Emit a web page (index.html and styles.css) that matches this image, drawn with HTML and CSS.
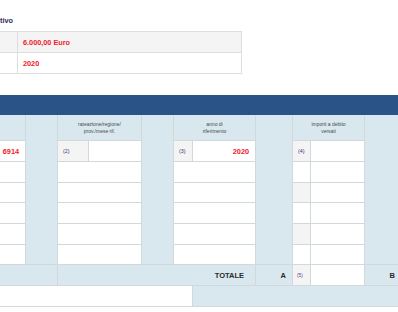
FILE: index.html
```html
<!DOCTYPE html>
<html lang="it">
<head>
<meta charset="utf-8">
<title>F24</title>
<link rel="stylesheet" href="styles.css">
</head>
<body>
<div class="page">
  <div class="title">tivo</div>

  <div class="summary">
    <div class="s-cell s-odd"></div>
    <div class="s-cell s-odd s-val">6.000,00 Euro</div>
    <div class="s-cell"></div>
    <div class="s-cell s-val">2020</div>
  </div>

  <div class="bar"></div>

  <div class="grid">
    <div class="spacer sp1"></div>
    <div class="spacer sp2"></div>
    <div class="spacer sp3"></div>
    <div class="spacer sp4"></div>

    <!-- header -->
    <div class="c hd"></div>
    <div class="c hd span2">rateazione/regione/<br>prov./mese rif.</div>
    <div class="c hd span2">anno di<br>riferimento</div>
    <div class="c hd span2">importi a debito<br>versati</div>
    <div class="c hd nob"></div>

    <!-- row 1 -->
    <div class="c w val">6914</div>
    <div class="c g lab">(2)</div>
    <div class="c w"></div>
    <div class="c g lab">(3)</div>
    <div class="c w val">2020</div>
    <div class="c g lab">(4)</div>
    <div class="c w"></div>
    <div class="c hd nob"></div>

    <!-- row 2 -->
    <div class="c w"></div>
    <div class="c w span2"></div>
    <div class="c w span2"></div>
    <div class="c w"></div>
    <div class="c w"></div>
    <div class="c hd nob"></div>

    <!-- row 3 -->
    <div class="c w"></div>
    <div class="c w span2"></div>
    <div class="c w span2"></div>
    <div class="c g"></div>
    <div class="c w"></div>
    <div class="c hd nob"></div>

    <!-- row 4 -->
    <div class="c w"></div>
    <div class="c w span2"></div>
    <div class="c w span2"></div>
    <div class="c w"></div>
    <div class="c w"></div>
    <div class="c hd nob"></div>

    <!-- row 5 -->
    <div class="c w"></div>
    <div class="c w span2"></div>
    <div class="c w span2"></div>
    <div class="c g"></div>
    <div class="c w"></div>
    <div class="c hd nob"></div>

    <!-- row 6 -->
    <div class="c w"></div>
    <div class="c w span2"></div>
    <div class="c w span2"></div>
    <div class="c w"></div>
    <div class="c w"></div>
    <div class="c hd nob"></div>

    <!-- total -->
    <div class="c hd span2"></div>
    <div class="c hd span5 tot">TOTALE</div>
    <div class="c hd tot">A</div>
    <div class="c g lab lab5">(5)</div>
    <div class="c w"></div>
    <div class="c hd tot">B</div>
    <div class="c hd nob"></div>

    <!-- bottom -->
    <div class="c w span6"></div>
    <div class="c hd span6 nob"></div>

    <div class="c w span12 nob"></div>
  </div>
</div>
</body>
</html>
```

FILE: styles.css
```css
html, body {
  margin: 0;
  padding: 0;
  overflow: hidden;
  background: #ffffff;
}

.page {
  width: 398px;
  height: 312px;
  overflow: hidden;
  font-family: "Liberation Sans", Arial, sans-serif;
  color: #333333;
}

.title {
  padding-top: 15px;
  height: 12px;
  line-height: 12px;
  font-size: 7.3px;
  font-weight: bold;
  color: #2d2d5c;
}

.summary {
  margin-top: 4px;
  display: grid;
  grid-template-columns: 18px 224px;
  grid-template-rows: 21px 21px;
  width: 242px;
  border-top: 1px solid #dedede;
}

.s-cell {
  box-sizing: border-box;
  border-right: 1px solid #dedede;
  border-bottom: 1px solid #dedede;
  background: #ffffff;
  display: flex;
  align-items: center;
}

.s-odd {
  background: #f4f4f4;
}

.s-val {
  padding-left: 5px;
  font-size: 7.3px;
  font-weight: bold;
  color: #f0202a;
}

.bar {
  margin-top: 21px;
  height: 20px;
  background: #2a5488;
}

.grid {
  display: grid;
  grid-template-columns: 26px 32px 31px 53px 32px 19px 63px 37px 18px 54px 37px 60px;
  grid-template-rows: 26px 21px 21px 20px 21px 21px 20px 21px 21px 20px;
  width: max-content;
  background: #d9e8ef;
}

.c, .spacer {
  box-sizing: border-box;
  border-right: 1px solid #d1d9dd;
  border-bottom: 1px solid #d1d9dd;
  display: flex;
  align-items: center;
  min-width: 0;
}

.spacer {
  background: #d9e8ef;
  grid-row: 1 / span 7;
}
.sp1 { grid-column: 2; }
.sp2 { grid-column: 5; }
.sp3 { grid-column: 8; }
.sp4 { grid-column: 11; }

.span2 { grid-column: span 2; }
.span5 { grid-column: span 5; }
.span6 { grid-column: span 6; }
.span12 { grid-column: span 12; }

.hd {
  background: #d9e8ef;
  justify-content: center;
  text-align: center;
  font-size: 5px;
  line-height: 7px;
  color: #4a4a4a;
}

.nob {
  border-right: none;
}

.w {
  background: #ffffff;
}

.g {
  background: #f4f4f4;
}

.val {
  justify-content: flex-end;
  padding-right: 6px;
  font-size: 7.3px;
  font-weight: bold;
  color: #f0202a;
}

.lab {
  padding-left: 5px;
  font-size: 5.3px;
  color: #34347a;
}

.lab5 {
  padding-left: 4px;
  color: #5b3e8c;
  font-size: 4.8px;
}

.tot {
  justify-content: flex-end;
  padding-right: 6px;
  font-size: 7.5px;
  font-weight: bold;
  color: #2a2a2a;
}

.span5.tot {
  padding-right: 11px;
}
```
